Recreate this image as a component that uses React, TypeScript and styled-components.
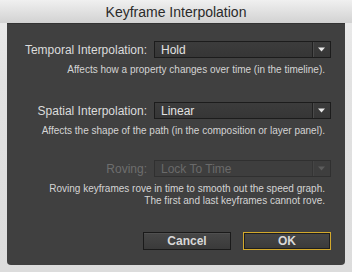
import React from 'react';
import styled, { createGlobalStyle } from 'styled-components';

const GlobalStyle = createGlobalStyle`
  body {
    margin: 0;
    background: #e4e4e4;
    font-family: "Liberation Sans", Arial, sans-serif;
  }
`;

const Window = styled.div`
  width: 352px;
  height: 272px;
  display: flex;
  flex-direction: column;
  background: linear-gradient(#ececec, #e2e2e2 30%, #dcdcdc);
  box-sizing: border-box;
`;

const TitleBar = styled.div`
  height: 23px;
  flex-shrink: 0;
  display: flex;
  align-items: center;
  justify-content: center;
  color: #2a2a2a;
  font-size: 14px;
  background: linear-gradient(#f0f0f0, #d2d2d2);
`;

const Panel = styled.div`
  flex: 1;
  margin: 0 7px 7px;
  padding: 18px 14px 15px 7px;
  background: #404040;
  border-radius: 0 0 4px 4px;
  display: flex;
  flex-direction: column;
  box-shadow: inset 0 1px 0 #333;
`;

const Group = styled.div<{ $top: number }>`
  margin-top: ${(p) => p.$top}px;
  display: flex;
  flex-direction: column;
  gap: 6px;
`;

const Row = styled.div`
  display: grid;
  grid-template-columns: 133px 177px;
  column-gap: 7px;
  align-items: center;
`;

const Label = styled.div<{ $disabled?: boolean }>`
  text-align: right;
  font-size: 12px;
  color: ${(p) => (p.$disabled ? '#6e6e6e' : '#dcdcdc')};
  white-space: nowrap;
`;

const Select = styled.div<{ $disabled?: boolean }>`
  height: 17px;
  box-sizing: border-box;
  display: flex;
  align-items: stretch;
  border: 1px solid ${(p) => (p.$disabled ? '#303030' : '#1c1c1c')};
  background: ${(p) =>
    p.$disabled ? '#3e3e3e' : 'linear-gradient(#3c3c3c, #363636)'};
  font-size: 12px;
  color: ${(p) => (p.$disabled ? '#6a6a6a' : '#e2e2e2')};
`;

const SelectValue = styled.div`
  flex: 1;
  padding-left: 6px;
  display: flex;
  align-items: center;
`;

const ArrowCell = styled.div<{ $disabled?: boolean }>`
  width: 17px;
  border-left: 1px solid ${(p) => (p.$disabled ? '#353535' : '#222')};
  box-shadow: inset 1px 0 0 ${(p) => (p.$disabled ? '#454545' : '#4a4a4a')};
  display: flex;
  align-items: center;
  justify-content: center;
`;

const Description = styled.div`
  text-align: right;
  padding-right: 6px;
  font-size: 10px;
  line-height: 12px;
  color: #d4d4d4;
`;

const ButtonRow = styled.div`
  margin-top: 25px;
  display: flex;
  justify-content: flex-end;
  gap: 12px;
  padding-right: 0;
`;

const Button = styled.div<{ $default?: boolean }>`
  width: 88px;
  height: 18px;
  box-sizing: border-box;
  display: flex;
  align-items: center;
  justify-content: center;
  font-size: 12px;
  font-weight: bold;
  color: #d8d8d8;
  background: linear-gradient(#474747, #3a3a3a);
  border: 1px solid ${(p) => (p.$default ? '#d3a92c' : '#1a1a1a')};
  box-shadow: ${(p) => (p.$default ? 'inset 0 0 0 1px #1e1e1e' : 'inset 0 1px 0 #505050')};
`;

const Arrow: React.FC<{ disabled?: boolean }> = ({ disabled }) => (
  <svg width="7" height="5" viewBox="0 0 7 5">
    <path d="M0 0.5 L7 0.5 L3.5 4.5 Z" fill={disabled ? '#5c5c5c' : '#e8e8e8'} />
  </svg>
);

const Dropdown: React.FC<{ value: string; disabled?: boolean }> = ({ value, disabled }) => (
  <Select $disabled={disabled}>
    <SelectValue>{value}</SelectValue>
    <ArrowCell $disabled={disabled}>
      <Arrow disabled={disabled} />
    </ArrowCell>
  </Select>
);

export default function App() {
  return (
    <>
      <GlobalStyle />
      <Window>
        <TitleBar>Keyframe Interpolation</TitleBar>
        <Panel>
          <Group $top={0}>
            <Row>
              <Label>Temporal Interpolation:</Label>
              <Dropdown value="Hold" />
            </Row>
            <Description>Affects how a property changes over time (in the timeline).</Description>
          </Group>
          <Group $top={26}>
            <Row>
              <Label>Spatial Interpolation:</Label>
              <Dropdown value="Linear" />
            </Row>
            <Description>Affects the shape of the path (in the composition or layer panel).</Description>
          </Group>
          <Group $top={23}>
            <Row>
              <Label $disabled>Roving:</Label>
              <Dropdown value="Lock To Time" disabled />
            </Row>
            <Description>
              Roving keyframes rove in time to smooth out the speed graph.
              <br />
              The first and last keyframes cannot rove.
            </Description>
          </Group>
          <ButtonRow>
            <Button>Cancel</Button>
            <Button $default>OK</Button>
          </ButtonRow>
        </Panel>
      </Window>
    </>
  );
}
